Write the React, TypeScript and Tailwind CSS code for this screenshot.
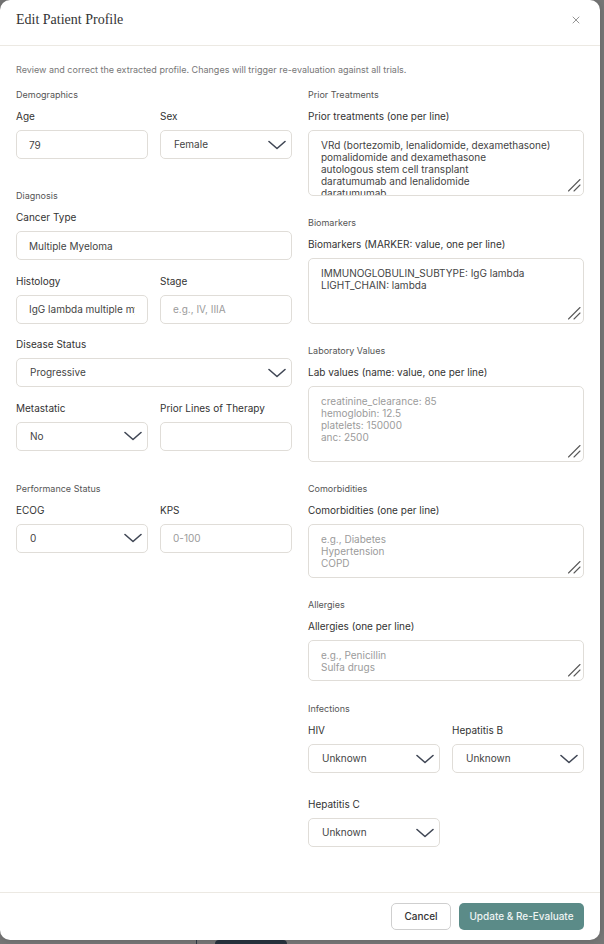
import React from "react";
import { X } from "lucide-react";

const inputCls =
  "block h-[29px] w-full rounded-[5px] border border-[#e0ddd8] bg-white px-[12px] text-[10px] text-[#444] placeholder:text-[#9b9b9b] outline-none";
const selectCls =
  "block h-[29px] w-full appearance-none rounded-[5px] border border-[#e0ddd8] bg-white pl-[13px] pr-[28px] text-[10px] text-[#444] outline-none";
const taCls =
  "block w-full resize-none overflow-hidden rounded-[5px] border border-[#e0ddd8] bg-white px-[12px] py-[8px] text-[10px] leading-[12px] text-[#444] placeholder:text-[#9b9b9b] outline-none";

function SectionTitle({ children }: { children: React.ReactNode }) {
  return <div className="mb-[8px] text-[9px] leading-[12px] text-[#555]">{children}</div>;
}

function Label({ children }: { children: React.ReactNode }) {
  return <label className="mb-[7px] block text-[10px] leading-[14px] text-[#333]">{children}</label>;
}

function Chevron() {
  return (
    <svg
      className="pointer-events-none absolute right-[6px] top-1/2 -translate-y-1/2"
      width="18"
      height="10"
      viewBox="0 0 18 10"
      fill="none"
    >
      <path d="M1 1.5 L9 8.5 L17 1.5" stroke="#3f4654" strokeWidth="1.6" strokeLinecap="round" strokeLinejoin="round" />
    </svg>
  );
}

function Grip() {
  return (
    <svg
      className="pointer-events-none absolute bottom-[4px] right-[3px]"
      width="14"
      height="14"
      viewBox="0 0 14 14"
      fill="none"
    >
      <path d="M1.5 13 L13 1.5 M7 13 L13 7" stroke="#5a5a5a" strokeWidth="1.1" strokeLinecap="round" />
    </svg>
  );
}

function TextField({ label, value, placeholder }: { label: string; value?: string; placeholder?: string }) {
  return (
    <div>
      <Label>{label}</Label>
      <input className={inputCls} defaultValue={value} placeholder={placeholder} />
    </div>
  );
}

function SelectField({ label, value, options }: { label: string; value: string; options: string[] }) {
  return (
    <div>
      <Label>{label}</Label>
      <div className="relative">
        <select className={selectCls} defaultValue={value}>
          {options.map((o) => (
            <option key={o}>{o}</option>
          ))}
        </select>
        <Chevron />
      </div>
    </div>
  );
}

function AreaField({
  label,
  value,
  placeholder,
  h,
}: {
  label: string;
  value?: string;
  placeholder?: string;
  h: string;
}) {
  return (
    <div>
      <Label>{label}</Label>
      <div className="relative">
        <textarea className={`${taCls} ${h}`} defaultValue={value} placeholder={placeholder} />
        <Grip />
      </div>
    </div>
  );
}

export default function App() {
  const yesNo = ["Unknown", "Yes", "No"];
  return (
    <div className="relative h-[944px] w-[604px] overflow-hidden bg-[#767676] font-['Inter',sans-serif]">
      <div className="absolute bottom-0 left-[196px] h-[4px] w-[1px] bg-[#2e3945]" />
      <div className="absolute bottom-0 left-[215px] h-[4px] w-[72px] rounded-t-[4px] bg-[#27323d]" />
      <div className="relative flex h-[940px] w-[600px] flex-col overflow-hidden rounded-[10px] bg-white shadow-[0_0_6px_rgba(0,0,0,0.15)]">
        {/* Header */}
        <div className="flex items-start justify-between border-b border-[#ece9e3] px-4 pb-[16px] pt-[11px]">
          <h2 className="font-['Liberation_Serif',serif] text-[14px] leading-[18px] text-[#333]">Edit Patient Profile</h2>
          <X size={12} strokeWidth={1.8} className="mr-[2px] mt-[3px] text-[#8a8a8a]" />
        </div>

        {/* Body */}
        <div className="flex-1 px-4 pt-[18px]">
          <p className="mb-[13px] text-[9px] leading-[12px] text-[#777]">
            Review and correct the extracted profile. Changes will trigger re-evaluation against all trials.
          </p>
          <div className="grid grid-cols-2 items-start gap-x-4">
            {/* Left column */}
            <div className="flex flex-col">
              <div>
                <SectionTitle>Demographics</SectionTitle>
                <div className="grid grid-cols-2 gap-x-3">
                  <TextField label="Age" value="79" />
                  <SelectField label="Sex" value="Female" options={["Female", "Male", "Other"]} />
                </div>
              </div>

              <div className="mt-[31px]">
                <SectionTitle>Diagnosis</SectionTitle>
                <TextField label="Cancer Type" value="Multiple Myeloma" />
                <div className="mt-[13.5px] grid grid-cols-2 gap-x-3">
                  <TextField label="Histology" value="IgG lambda multiple myeloma" />
                  <TextField label="Stage" placeholder="e.g., IV, IIIA" />
                </div>
                <div className="mt-[13.5px]">
                  <SelectField
                    label="Disease Status"
                    value="Progressive"
                    options={["Progressive", "Stable", "Responding", "Remission"]}
                  />
                </div>
                <div className="mt-[13.5px] grid grid-cols-2 gap-x-3">
                  <SelectField label="Metastatic" value="No" options={["Unknown", "Yes", "No"]} />
                  <TextField label="Prior Lines of Therapy" />
                </div>
              </div>

              <div className="mt-[32px]">
                <SectionTitle>Performance Status</SectionTitle>
                <div className="grid grid-cols-2 gap-x-3">
                  <SelectField label="ECOG" value="0" options={["0", "1", "2", "3", "4"]} />
                  <TextField label="KPS" placeholder="0-100" />
                </div>
              </div>
            </div>

            {/* Right column */}
            <div className="flex flex-col">
              <div>
                <SectionTitle>Prior Treatments</SectionTitle>
                <AreaField
                  label="Prior treatments (one per line)"
                  h="h-[66px]"
                  value={
                    "VRd (bortezomib, lenalidomide, dexamethasone)\npomalidomide and dexamethasone\nautologous stem cell transplant\ndaratumumab and lenalidomide\ndaratumumab\ncarfilzomib"
                  }
                />
              </div>
              <div className="mt-[21px]">
                <SectionTitle>Biomarkers</SectionTitle>
                <AreaField
                  label="Biomarkers (MARKER: value, one per line)"
                  h="h-[66px]"
                  value={"IMMUNOGLOBULIN_SUBTYPE: IgG lambda\nLIGHT_CHAIN: lambda"}
                />
              </div>
              <div className="mt-[21px]">
                <SectionTitle>Laboratory Values</SectionTitle>
                <AreaField
                  label="Lab values (name: value, one per line)"
                  h="h-[76px]"
                  placeholder={"creatinine_clearance: 85\nhemoglobin: 12.5\nplatelets: 150000\nanc: 2500"}
                />
              </div>
              <div className="mt-[21px]">
                <SectionTitle>Comorbidities</SectionTitle>
                <AreaField
                  label="Comorbidities (one per line)"
                  h="h-[54px]"
                  placeholder={"e.g., Diabetes\nHypertension\nCOPD"}
                />
              </div>
              <div className="mt-[21px]">
                <SectionTitle>Allergies</SectionTitle>
                <AreaField label="Allergies (one per line)" h="h-[41px]" placeholder={"e.g., Penicillin\nSulfa drugs"} />
              </div>
              <div className="mt-[22px]">
                <SectionTitle>Infections</SectionTitle>
                <div className="grid grid-cols-2 gap-x-3">
                  <SelectField label="HIV" value="Unknown" options={yesNo} />
                  <SelectField label="Hepatitis B" value="Unknown" options={yesNo} />
                </div>
                <div className="mt-[24px] grid grid-cols-2 gap-x-3">
                  <SelectField label="Hepatitis C" value="Unknown" options={yesNo} />
                </div>
              </div>
            </div>
          </div>
        </div>

        {/* Footer */}
        <div className="flex justify-end gap-2 border-t border-[#ece9e3] px-4 py-[10px]">
          <button className="h-[27px] w-[60px] rounded-[5px] border border-[#cfcfcf] bg-white text-[10px] font-medium text-[#333]">
            Cancel
          </button>
          <button className="h-[27px] w-[125px] rounded-[5px] bg-[#5b8b88] text-[10px] font-medium text-[#eef4f3]">
            Update &amp; Re-Evaluate
          </button>
        </div>
      </div>
    </div>
  );
}
